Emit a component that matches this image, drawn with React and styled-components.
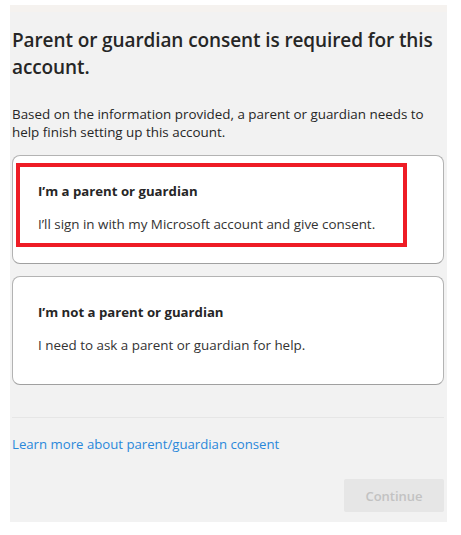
import React from "react";
import styled, { createGlobalStyle } from "styled-components";

const Global = createGlobalStyle`
  html, body { margin: 0; padding: 0; background: #ffffff; }
  body { font-family: "Open Sans", "Noto Sans", Arial, sans-serif; color: #1b1b1b; }
  * { box-sizing: border-box; }
`;

const Panel = styled.div`
  margin: 5px 0 0 10px;
  width: 437px;
  height: 517px;
  background: #f2f2f2;
  border-top: 7px solid #f5f2ef;
  padding: 0 3px 0 2px;
  display: flex;
  flex-direction: column;
`;

const Title = styled.h1`
  margin: 15px 0 0;
  font-size: 19px;
  line-height: 27px;
  font-weight: 600;
  color: #262626;
  letter-spacing: -0.1px;
`;

const Intro = styled.p`
  margin: 24px 0 0;
  font-size: 13.4px;
  line-height: 18px;
  color: #262626;
`;

const Options = styled.div`
  margin-top: 14px;
  display: flex;
  flex-direction: column;
  gap: 12px;
`;

const Card = styled.div`
  position: relative;
  background: #ffffff;
  border: 1px solid #b3b3b3;
  border-bottom-color: #a0a0a0;
  border-radius: 8px;
  height: 109px;
  padding: 26px 20px 0 25px;
`;

const CardTitle = styled.div`
  font-size: 13.2px;
  font-weight: 700;
  line-height: 18px;
  color: #262626;
`;

const CardText = styled.div`
  margin-top: 15px;
  font-size: 13.4px;
  line-height: 18px;
  color: #333333;
`;

const Highlight = styled.div`
  position: absolute;
  left: 3px;
  top: 7px;
  width: 391px;
  height: 84px;
  border: 4px solid #ee1c25;
  pointer-events: none;
`;

const Divider = styled.hr`
  margin: 32px 0 0;
  border: 0;
  border-top: 1px solid #e6e6e6;
`;

const Link = styled.a`
  margin-top: 17px;
  font-size: 13.2px;
  line-height: 18px;
  color: #2a88da;
  text-decoration: none;
  align-self: flex-start;
`;

const Footer = styled.div`
  margin-top: 26px;
  display: flex;
  justify-content: flex-end;
`;

const Button = styled.button`
  width: 100px;
  height: 33px;
  border: 0;
  border-radius: 2px;
  background: #e6e6e6;
  color: #c2c2c2;
  font-family: inherit;
  font-size: 13px;
  font-weight: 600;
`;

const options = [
  {
    title: "I’m a parent or guardian",
    text: "I’ll sign in with my Microsoft account and give consent.",
    highlighted: true,
  },
  {
    title: "I’m not a parent or guardian",
    text: "I need to ask a parent or guardian for help.",
  },
];

export default function App() {
  return (
    <>
      <Global />
      <Panel>
        <Title>Parent or guardian consent is required for this account.</Title>
        <Intro>
          Based on the information provided, a parent or guardian needs to help finish setting up this account.
        </Intro>
        <Options>
          {options.map((o) => (
            <Card key={o.title}>
              {o.highlighted && <Highlight />}
              <CardTitle>{o.title}</CardTitle>
              <CardText>{o.text}</CardText>
            </Card>
          ))}
        </Options>
        <Divider />
        <Link href="#">Learn more about parent/guardian consent</Link>
        <Footer>
          <Button disabled>Continue</Button>
        </Footer>
      </Panel>
    </>
  );
}
